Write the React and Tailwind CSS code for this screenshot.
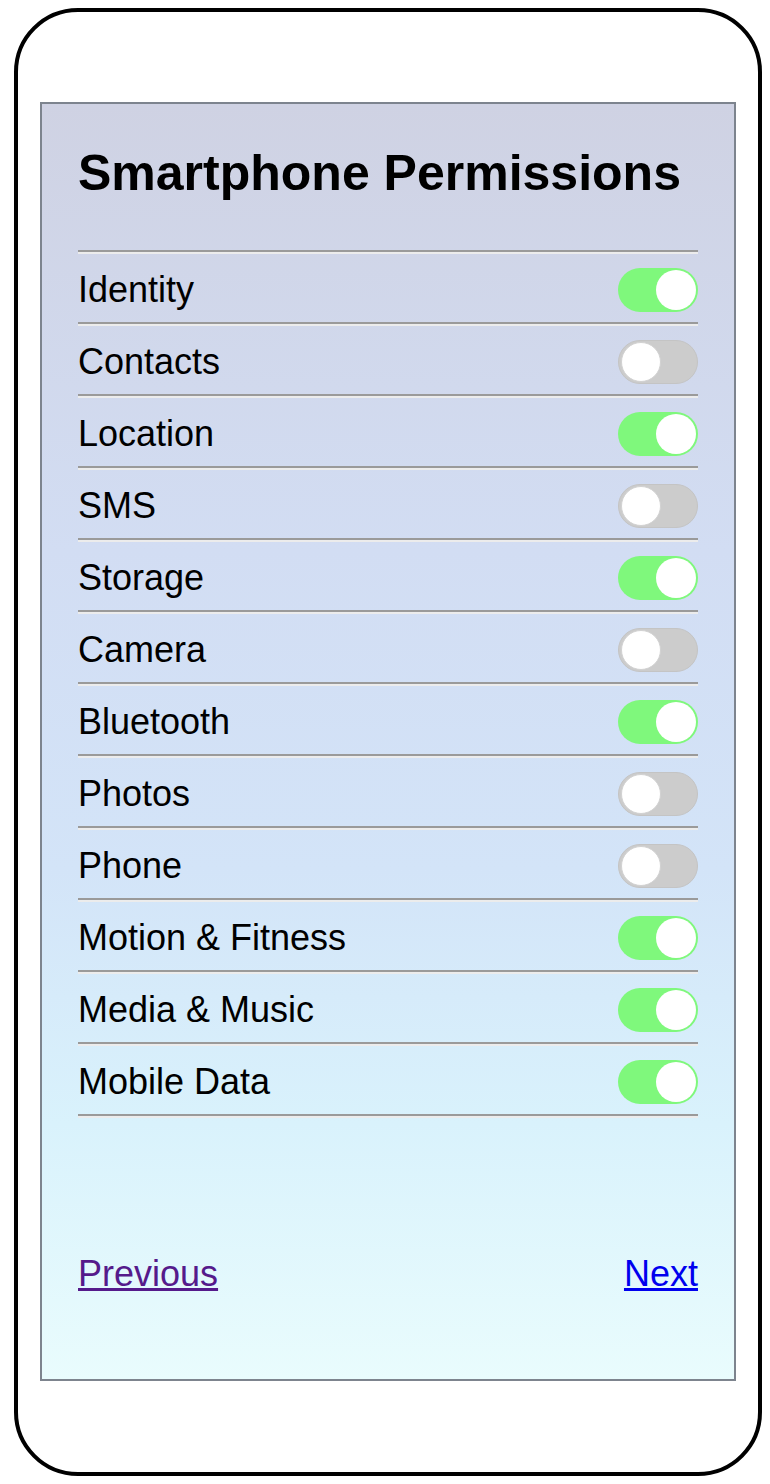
import React, { useState } from "react";

const initialPermissions = [
  { name: "Identity", on: true },
  { name: "Contacts", on: false },
  { name: "Location", on: true },
  { name: "SMS", on: false },
  { name: "Storage", on: true },
  { name: "Camera", on: false },
  { name: "Bluetooth", on: true },
  { name: "Photos", on: false },
  { name: "Phone", on: false },
  { name: "Motion & Fitness", on: true },
  { name: "Media & Music", on: true },
  { name: "Mobile Data", on: true },
];

const Separator = () => (
  <div>
    <div className="h-[2px] bg-[#9a9a9a]" />
    <div className="h-[2px] bg-[#ececec]" />
  </div>
);

const Toggle = ({ on, onClick }) => (
  <button
    onClick={onClick}
    className={`relative w-[80px] h-[44px] rounded-full flex items-center px-[2px] ${
      on ? "bg-[#7ff87c] justify-end" : "bg-[#cccccc] justify-start border border-[#c4c4c4]"
    }`}
  >
    <span
      className={`block w-[40px] h-[40px] rounded-full bg-white ${
        on ? "" : "border border-[#d2d2d2]"
      }`}
    />
  </button>
);

const App = () => {
  const [permissions, setPermissions] = useState(initialPermissions);

  const toggle = (i) =>
    setPermissions((prev) => prev.map((p, idx) => (idx === i ? { ...p, on: !p.on } : p)));

  return (
    <div className="w-[770px] h-[1484px] bg-white pt-[8px] pl-[14px] font-['Liberation_Sans',Arial,sans-serif] text-black">
      <div className="w-[748px] h-[1468px] border-4 border-black rounded-[64px] pt-[90px] px-[22px]">
        <div className="h-[1279px] border-2 border-[#7d848e] bg-[linear-gradient(to_bottom,#cfd2e3_0%,#d2ddf3_35%,#d3e4f8_60%,#d9f2fc_80%,#e9fcfd_100%)] px-[36px] pt-[41px]">
          <h1 className="text-[50px] leading-[56px] font-bold">Smartphone Permissions</h1>

          <div className="mt-[49px]">
            {permissions.map((p, i) => (
              <div key={p.name}>
                <Separator />
                <div className="h-[68px] flex items-center justify-between pt-[4px]">
                  <span className="text-[36px] leading-[40px]">{p.name}</span>
                  <Toggle on={p.on} onClick={() => toggle(i)} />
                </div>
              </div>
            ))}
            <Separator />
          </div>

          <div className="mt-[136px] flex justify-between text-[36px] leading-[40px]">
            <a href="#" className="underline text-[#551a8b]">
              Previous
            </a>
            <a href="#" className="underline text-[#0000ee]">
              Next
            </a>
          </div>
        </div>
      </div>
    </div>
  );
};

export default App;
